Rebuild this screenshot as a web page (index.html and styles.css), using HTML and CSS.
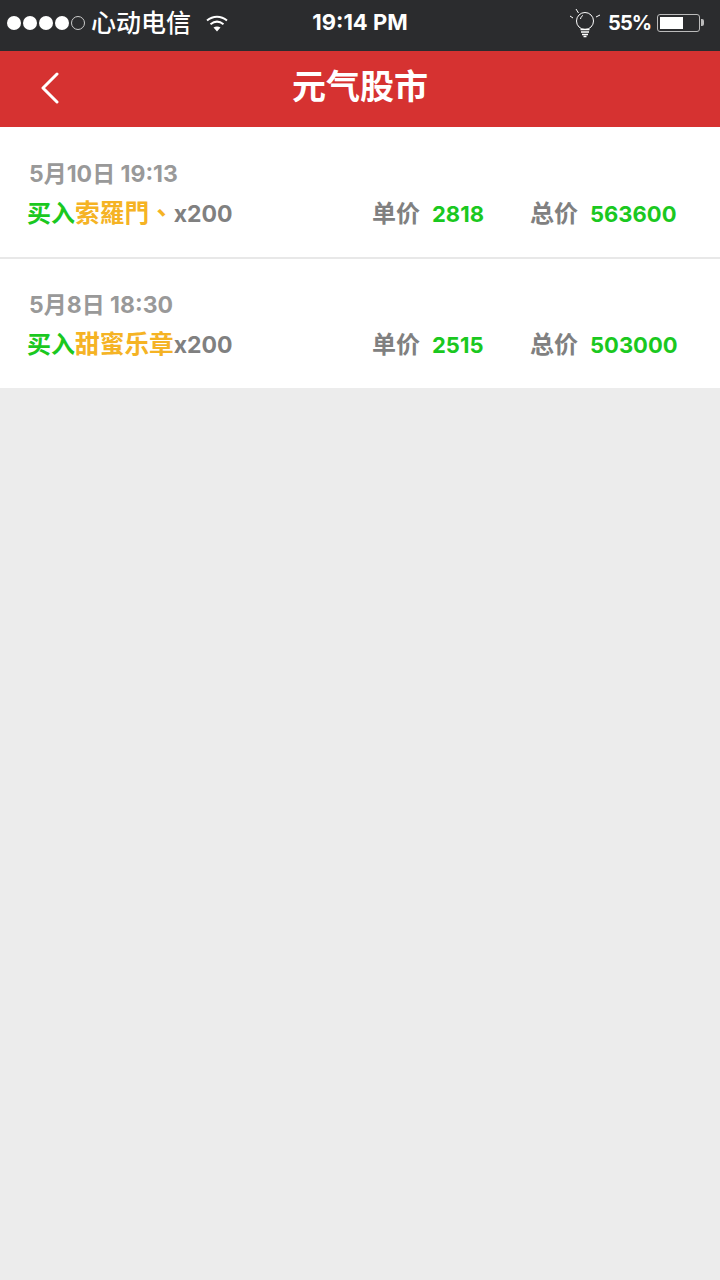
FILE: index.html
```html
<!DOCTYPE html>
<html lang="en">
<head>
    <meta charset="UTF-8">
    <meta name="viewport" content="width=device-width, initial-scale=1.0">
    <title>元气股市</title>
    <link rel="stylesheet" href="styles.css">
</head>
<body>
    <div class="status-bar">
        <div class="status-left">
            <span class="signal">
                <i class="dot"></i><i class="dot"></i><i class="dot"></i><i class="dot"></i><i class="dot empty"></i>
            </span>
            <span class="carrier">心动电信</span>
            <svg class="wifi" width="24" height="18" viewBox="0 0 24 18" fill="none" stroke="#fff" stroke-width="2">
                <path d="M2 6.5C8 1.5 16 1.5 22 6.5"/>
                <path d="M5.5 10.2C9.5 7 14.500 7 18.500 10.200"/>
                <path d="M12 17.500L8.500 13.500C10.500 12 13.500 12 15.500 13.500Z" fill="#fff" stroke="none"/>
            </svg>
        </div>
        <div class="status-time">19:14 PM</div>
        <div class="status-right">
            <svg class="bulb" width="32" height="30" viewBox="0 0 32 30" fill="none" stroke="#fff" stroke-width="1">
                <circle cx="16" cy="13" r="8.500"/>
                <path d="M11.500 11C11.800 9 12.800 8 14 7.500"/>
                <path d="M7 1L9.500 5M1 8L4 10M31 7L27 9"/>
                <path d="M11.500 21.500H20.500M12 24H20M13 26.500H19M14.500 28.500H17.500" stroke-width="1.500"/>
            </svg>
            <span class="percent">55%</span>
            <span class="battery"><span class="battery-fill"></span></span>
            <span class="battery-tip"></span>
        </div>
    </div>

    <div class="nav-bar">
        <svg class="back" width="20" height="32" viewBox="0 0 20 32" fill="none" stroke="#fff" stroke-width="3" stroke-linecap="round" stroke-linejoin="round">
            <path d="M17 2L3 16L17 30"/>
        </svg>
        <h1>元气股市</h1>
    </div>

    <ul class="records">
        <li class="record">
            <div class="date">5月10日 19:13</div>
            <div class="detail">
                <div><span class="buy">买入</span><span class="stock">索羅門、</span><span class="amount">x200</span></div>
                <div><span class="label">单价</span><span class="value">2818</span></div>
                <div><span class="label">总价</span><span class="value">563600</span></div>
            </div>
        </li>
        <li class="record">
            <div class="date">5月8日 18:30</div>
            <div class="detail">
                <div><span class="buy">买入</span><span class="stock">甜蜜乐章</span><span class="amount">x200</span></div>
                <div><span class="label">单价</span><span class="value">2515</span></div>
                <div><span class="label">总价</span><span class="value">503000</span></div>
            </div>
        </li>
    </ul>
</body>
</html>
```

FILE: styles.css
```css
* { box-sizing: border-box; }
body { margin: 0; min-height: 1280px; background-color: #ececec; font-family: "Inter", "Noto Sans CJK SC", sans-serif; font-weight: 700; }

.status-bar { position: relative; display: flex; justify-content: space-between; align-items: center; height: 51px; padding: 0 16px 6px 7px; background-color: #2b2c2e; color: #fff; }
.status-left { display: flex; align-items: center; }
.signal { display: flex; gap: 2px; margin-right: 6px; }
.dot { width: 14px; height: 14px; border-radius: 50%; background: #fff; }
.dot.empty { background: none; border: 1px solid #ccc; }
.carrier { font-size: 25px; font-weight: 500; line-height: 30px; }
.wifi { margin-left: 14px; }
.status-time { position: absolute; left: 0; right: 0; top: 7px; text-align: center; font-size: 22px; line-height: 30px; }
.status-right { display: flex; align-items: center; }
.bulb { margin-right: 7px; }
.percent { font-size: 20px; letter-spacing: -1px; line-height: 30px; margin-right: 6px; }
.battery { width: 43px; height: 18px; padding: 2px; border: 1px solid #bbb; border-radius: 3px; }
.battery-fill { display: block; width: 23px; height: 100%; background: #fff; }
.battery-tip { width: 3px; height: 7px; margin-left: 1px; background: #bbb; border-radius: 0 2px 2px 0; }

.nav-bar { position: relative; height: 76px; padding-bottom: 4px; background-color: #d63231; display: flex; align-items: center; justify-content: center; }
.nav-bar h1 { margin: 0; color: #fff; font-size: 34px; font-weight: 700; line-height: 40px; }
.back { position: absolute; left: 40px; top: 21px; }

.records { margin: 0; padding: 0; list-style: none; background: #fff; }
.record { height: 130px; padding: 30px 0 0 27px; }
.record + .record { height: 131px; border-top: 2px solid #e8e8e8; padding-top: 29px; }
.date { padding-left: 2px; color: #999; font-size: 23px; line-height: 34px; }
.detail { display: grid; grid-template-columns: 345px 158px 1fr; margin-top: 6px; font-size: 22px; line-height: 34px; }
.buy { color: #1ac820; font-size: 24px; line-height: 1; }
.stock { color: #f5b324; font-family: "Noto Sans CJK TC", sans-serif; font-size: 24.7px; line-height: 1; }
.amount { color: #808080; font-size: 23px; }
.label { color: #808080; margin-right: 12px; font-size: 24px; line-height: 1; }
.value { color: #1ac820; }
```
